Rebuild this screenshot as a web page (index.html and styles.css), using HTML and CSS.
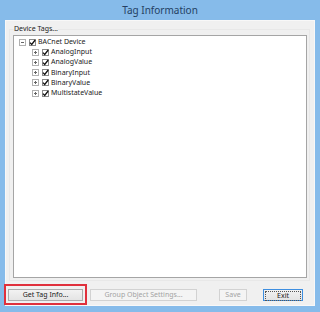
FILE: index.html
```html
<!DOCTYPE html>
<html lang="en">
<head>
    <meta charset="UTF-8">
    <title>Tag Information</title>
    <link rel="stylesheet" href="styles.css">
</head>
<body>
    <div class="window">
        <div class="titlebar">Tag Information</div>
        <div class="client">
            <fieldset class="group">
                <legend>Device Tags...</legend>
                <div class="tree">
                    <div class="node root">
                        <svg class="expander" width="7" height="7" viewBox="0 0 7 7"><rect x="0.5" y="0.5" width="6" height="6" fill="#fff" stroke="#b0b0b0"/><path d="M2 3.5H5" stroke="#666"/></svg>
                        <span class="check"><svg width="7" height="7" viewBox="0 0 7 7"><path d="M1 3.6L2.7 5.4L6.2 1" fill="none" stroke="#111" stroke-width="1.3"/></svg></span>
                        <span class="label">BACnet Device</span>
                    </div>
                    <div class="node child">
                        <svg class="expander" width="7" height="7" viewBox="0 0 7 7"><rect x="0.5" y="0.5" width="6" height="6" fill="#fff" stroke="#b0b0b0"/><path d="M2 3.5H5M3.5 2V5" stroke="#666"/></svg>
                        <span class="check"><svg width="7" height="7" viewBox="0 0 7 7"><path d="M1 3.6L2.7 5.4L6.2 1" fill="none" stroke="#111" stroke-width="1.3"/></svg></span>
                        <span class="label">AnalogInput</span>
                    </div>
                    <div class="node child">
                        <svg class="expander" width="7" height="7" viewBox="0 0 7 7"><rect x="0.5" y="0.5" width="6" height="6" fill="#fff" stroke="#b0b0b0"/><path d="M2 3.5H5M3.5 2V5" stroke="#666"/></svg>
                        <span class="check"><svg width="7" height="7" viewBox="0 0 7 7"><path d="M1 3.6L2.7 5.4L6.2 1" fill="none" stroke="#111" stroke-width="1.3"/></svg></span>
                        <span class="label">AnalogValue</span>
                    </div>
                    <div class="node child">
                        <svg class="expander" width="7" height="7" viewBox="0 0 7 7"><rect x="0.5" y="0.5" width="6" height="6" fill="#fff" stroke="#b0b0b0"/><path d="M2 3.5H5M3.5 2V5" stroke="#666"/></svg>
                        <span class="check"><svg width="7" height="7" viewBox="0 0 7 7"><path d="M1 3.6L2.7 5.4L6.2 1" fill="none" stroke="#111" stroke-width="1.3"/></svg></span>
                        <span class="label">BinaryInput</span>
                    </div>
                    <div class="node child">
                        <svg class="expander" width="7" height="7" viewBox="0 0 7 7"><rect x="0.5" y="0.5" width="6" height="6" fill="#fff" stroke="#b0b0b0"/><path d="M2 3.5H5M3.5 2V5" stroke="#666"/></svg>
                        <span class="check"><svg width="7" height="7" viewBox="0 0 7 7"><path d="M1 3.6L2.7 5.4L6.2 1" fill="none" stroke="#111" stroke-width="1.3"/></svg></span>
                        <span class="label">BinaryValue</span>
                    </div>
                    <div class="node child">
                        <svg class="expander" width="7" height="7" viewBox="0 0 7 7"><rect x="0.5" y="0.5" width="6" height="6" fill="#fff" stroke="#b0b0b0"/><path d="M2 3.5H5M3.5 2V5" stroke="#666"/></svg>
                        <span class="check"><svg width="7" height="7" viewBox="0 0 7 7"><path d="M1 3.6L2.7 5.4L6.2 1" fill="none" stroke="#111" stroke-width="1.3"/></svg></span>
                        <span class="label">MultistateValue</span>
                    </div>
                </div>
            </fieldset>

            <div class="buttons">
                <span class="highlight"><button class="btn get-info">Get Tag Info...</button></span>
                <button class="btn group-settings" disabled>Group Object Settings...</button>
                <button class="btn save" disabled>Save</button>
                <button class="btn exit"><span class="focus">Exit</span></button>
            </div>
        </div>
    </div>
</body>
</html>
```

FILE: styles.css
```css
body {
    margin: 0;
    width: 320px;
    height: 312px;
    overflow: hidden;
    font-family: "Noto Sans", "Liberation Sans", sans-serif;
}

.window {
    width: 320px;
    height: 312px;
    box-sizing: border-box;
    background-color: #86bbea;
    padding: 0 5px 6px 5px;
}

.titlebar {
    height: 20px;
    line-height: 20px;
    text-align: center;
    font-size: 10px;
    color: #243f63;
}

.client {
    height: 286px;
    box-sizing: border-box;
    background-color: #f0f0f0;
    border: 1px solid #f8f8f8;
}

.group {
    margin: 4px 4px 0 3px;
    padding: 0 2px 2px 3px;
    border: 1px solid #e8e8e8;
    height: 256px;
    box-sizing: border-box;
}

.group legend {
    padding: 0;
    margin-left: 1px;
    font-size: 7px;
    line-height: 8px;
    height: 8px;
    color: #1a1a1a;
}

.tree {
    margin-top: 2px;
    height: 243px;
    box-sizing: border-box;
    background-color: #fff;
    border: 1px solid #a5a5a5;
    padding-top: 1px;
}

.node {
    display: flex;
    align-items: center;
    height: 10.2px;
    font-size: 7px;
    color: #1a1a1a;
}

.node.root {
    padding-left: 5px;
}

.node.child {
    padding-left: 18px;
}

.expander {
    display: block;
    flex: none;
}

.check {
    display: block;
    width: 7px;
    height: 7px;
    margin-left: 3px;
    box-sizing: border-box;
    border: 1px solid #8a8a8a;
    background-color: #fff;
}

.check svg {
    display: block;
    margin: -1px 0 0 -1px;
}

.label {
    margin-left: 2px;
    line-height: 10px;
}

.buttons {
    display: flex;
    align-items: center;
    margin-top: 3px;
}

.highlight {
    display: block;
    margin-left: -2px;
    padding: 3px 2px 2px 2px;
    border: 2px solid #e0303c;
}

.btn {
    display: block;
    height: 12px;
    padding: 0;
    box-sizing: border-box;
    font-family: "Noto Sans", "Liberation Sans", sans-serif;
    font-size: 7px;
    line-height: 10px;
    color: #1a1a1a;
    border: 1px solid #acacac;
    background: linear-gradient(#f2f2f2, #e4e4e4);
}

.btn:disabled {
    color: #a3a3a3;
    border-color: #d2d2d2;
    background: #f4f4f4;
}

.get-info {
    width: 75px;
}

.group-settings {
    width: 107px;
    margin-left: 3px;
}

.save {
    width: 28px;
    margin-left: 22px;
}

.exit {
    width: 40px;
    margin-left: 16px;
    border-color: #3d8ee0;
    padding: 1px;
}

.exit .focus {
    display: block;
    height: 8px;
    line-height: 8px;
    border: 1px dotted #555;
}
```
